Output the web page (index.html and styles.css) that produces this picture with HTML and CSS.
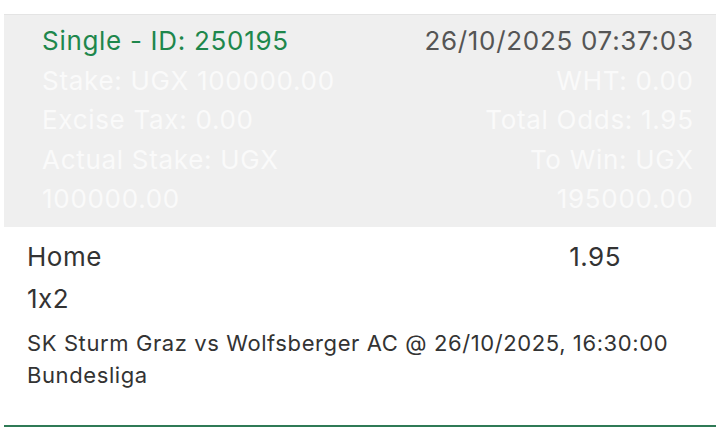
FILE: index.html
```html
<!DOCTYPE html>
<html>
<head>
<meta charset="utf-8">
<link rel="stylesheet" href="styles.css">
</head>
<body>
<div class="top-strip"></div>
<section class="summary">
  <div class="col col-left">
    <div class="title">Single - ID: 250195</div>
    <div class="faint">Stake: UGX 100000.00</div>
    <div class="faint">Excise Tax: 0.00</div>
    <div class="faint">Actual Stake: UGX<br>100000.00</div>
  </div>
  <div class="col col-right">
    <div class="date">26/10/2025 07:37:03</div>
    <div class="faint">WHT: 0.00</div>
    <div class="faint">Total Odds: 1.95</div>
    <div class="faint">To Win: UGX<br>195000.00</div>
  </div>
</section>
<section class="selection">
  <div class="pick-row">
    <span class="pick">Home</span>
    <span class="odds">1.95</span>
  </div>
  <div class="market">1x2</div>
  <div class="match">SK Sturm Graz vs Wolfsberger AC @ 26/10/2025, 16:30:00<br>Bundesliga</div>
</section>
<div class="divider"></div>
</body>
</html>
```

FILE: styles.css
```css
html, body {
  margin: 0;
  padding: 0;
  background: #ffffff;
}
body {
  width: 720px;
  height: 435px;
  overflow: hidden;
  font-family: Inter, "Open Sans", sans-serif;
  font-feature-settings: "calt" 0;
}
.top-strip {
  height: 14px;
  margin: 0 4px;
  background: #ffffff;
}
.summary {
  margin: 0 4px;
  background: #efefef;
  border-top: 1px solid #e4e4e4;
  padding: 6px 23px 8px 38px;
  display: flex;
  justify-content: space-between;
  font-size: 26px;
  line-height: 39.5px;
  letter-spacing: 0.7px;
}
.col-right {
  text-align: right;
  margin-right: -0.7px;
}
.title {
  color: #1e874c;
}
.date {
  color: #555555;
}
.faint {
  color: #fafafa;
}
.selection {
  padding: 10px 0 0 27px;
  color: #333333;
}
.pick-row {
  display: flex;
  justify-content: space-between;
  padding-right: 99px;
  font-size: 26px;
  line-height: 39px;
  letter-spacing: 0.5px;
}
.market {
  font-size: 26px;
  line-height: 39px;
  margin-top: 3px;
  letter-spacing: 0.5px;
}
.match {
  margin-top: 9px;
  font-size: 22px;
  line-height: 32px;
  letter-spacing: 0.6px;
}
.divider {
  margin: 34px 4px 0;
  height: 2px;
  background: #2f7a56;
}
```
